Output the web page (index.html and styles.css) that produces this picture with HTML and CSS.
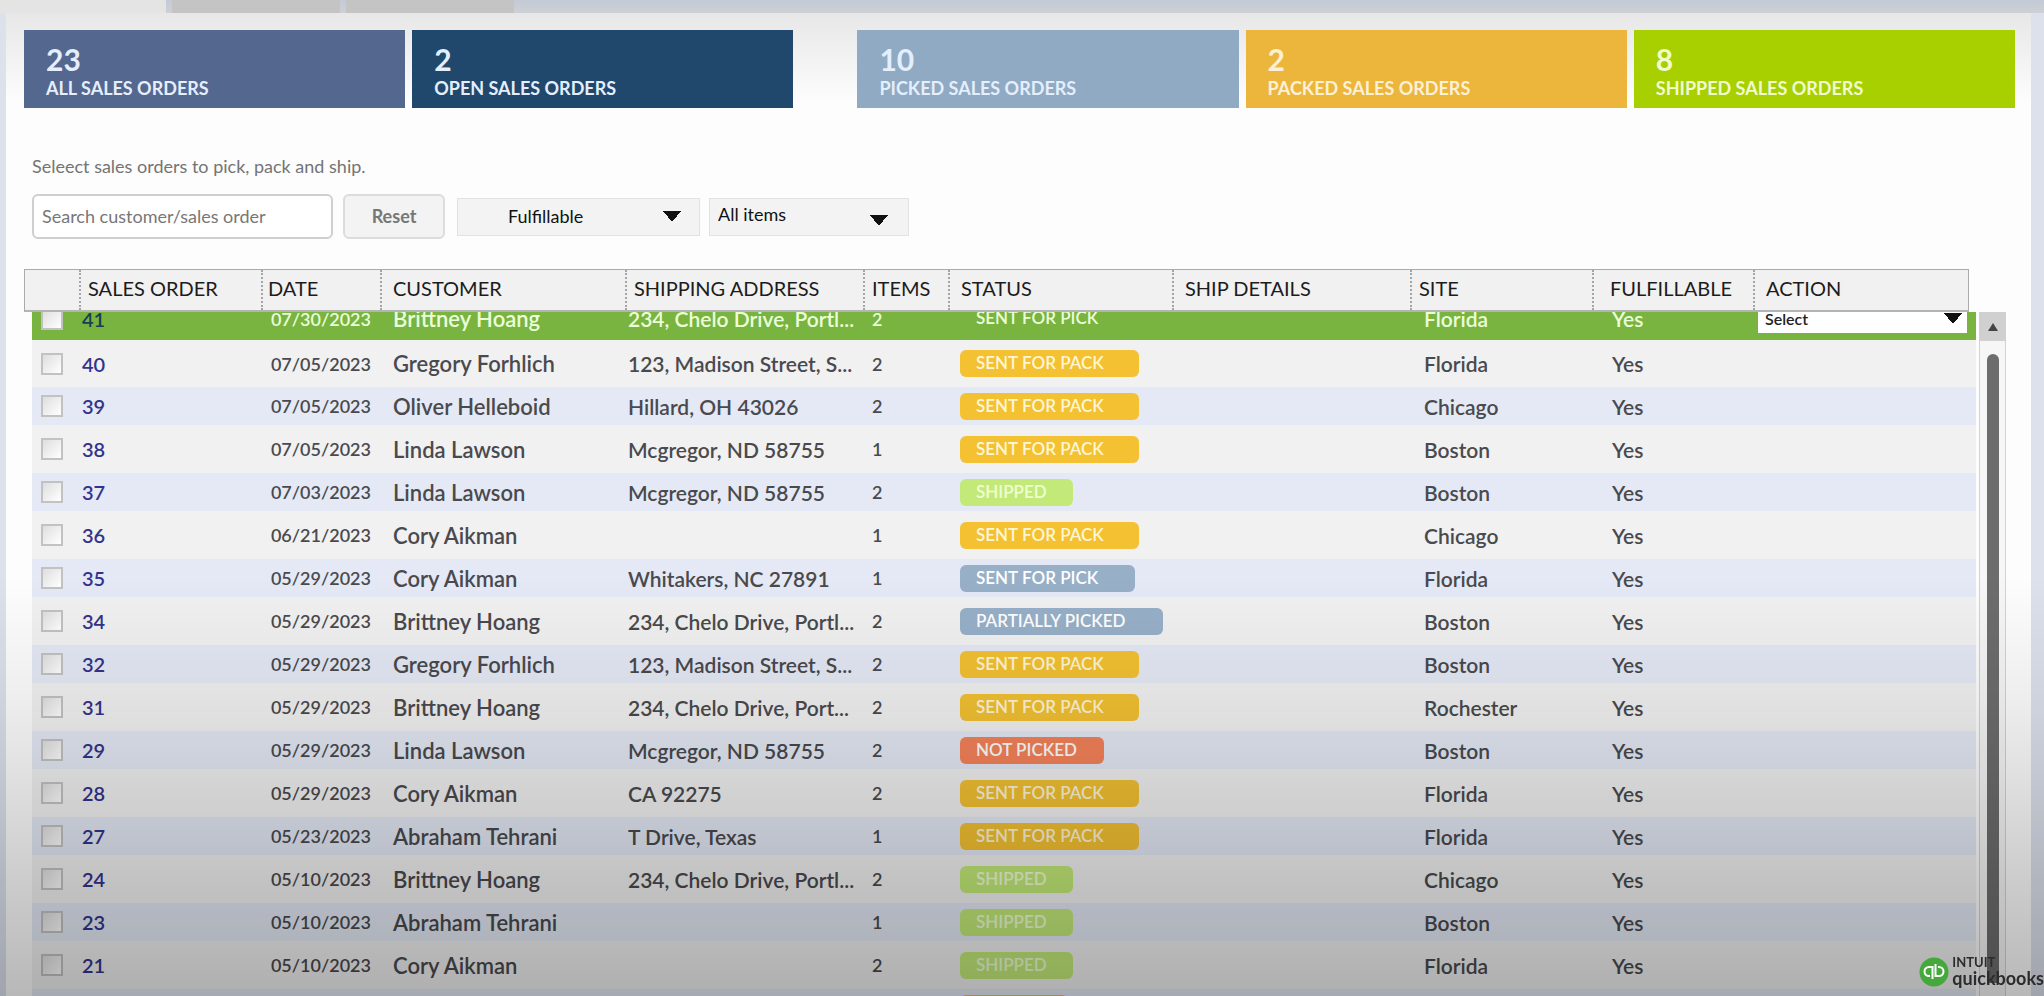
FILE: index.html
```html
<!DOCTYPE html>
<html lang="en">
<head>
<meta charset="utf-8">
<title>Sales Orders</title>
<link rel="stylesheet" href="styles.css">
</head>
<body>
<nav class="tabs" aria-label="Views">
  <button class="tab tab-active" type="button" aria-label="Current view"></button>
  <button class="tab" type="button" aria-label="Second view"></button>
  <button class="tab" type="button" aria-label="Third view"></button>
</nav>
<main class="panel">
  <section class="cards">
    <a class="card all" href="#"><strong>23</strong><span>ALL SALES ORDERS</span></a>
    <a class="card open" href="#"><strong>2</strong><span>OPEN SALES ORDERS</span></a>
    <a class="card picked" href="#"><strong>10</strong><span>PICKED SALES ORDERS</span></a>
    <a class="card packed" href="#"><strong>2</strong><span>PACKED SALES ORDERS</span></a>
    <a class="card shipped" href="#"><strong>8</strong><span>SHIPPED SALES ORDERS</span></a>
  </section>
  <section class="filters">
    <label class="hint" for="search">Seleect sales orders to pick, pack and ship.</label>
    <div class="controls">
      <input id="search" class="search" type="text" placeholder="Search customer/sales order">
      <button class="reset" type="button">Reset</button>
      <select class="pick fulfil" aria-label="Fulfillment"><option>Fulfillable</option></select>
      <select class="pick items-filter" aria-label="Items"><option>All items</option></select>
    </div>
  </section>
  <section class="orders">
    <table class="head">
      <colgroup><col class="h0"><col class="h1"><col class="h2"><col class="h3"><col class="h4"><col class="h5"><col class="h6"><col class="h7"><col class="h8"><col class="h9"><col></colgroup>
      <thead><tr><th></th><th class="l9">SALES ORDER</th><th class="l6">DATE</th><th class="l12">CUSTOMER</th><th class="l9">SHIPPING ADDRESS</th><th class="l9">ITEMS</th><th class="l12">STATUS</th><th class="l12">SHIP DETAILS</th><th class="l9">SITE</th><th class="l16">FULFILLABLE</th><th class="l12">ACTION</th></tr></thead>
    </table>
    <div class="viewport">
      <div class="scroller">
        <table class="body">
          <colgroup><col class="b0"><col class="b1"><col class="b2"><col class="b3"><col class="b4"><col class="b5"><col class="b6"><col class="b7"><col class="b8"><col></colgroup>
          <tbody id="rows"></tbody>
        </table>
      </div>
      <div class="scrollbar">
        <button class="up" type="button" aria-label="Scroll up"><svg viewBox="0 0 10 8"><path d="M5 0 10 8H0z"/></svg></button>
        <div class="track"><div class="thumb"></div></div>
      </div>
    </div>
  </section>
</main>
<div class="shade"></div>
<div class="brand">
  <svg viewBox="0 0 30 30" aria-hidden="true"><circle cx="15" cy="15" r="14.5" fill="#45a83c"/><g fill="none" stroke="#fff" stroke-width="2"><path d="M13.5 22V10H10a4.5 4.5 0 0 0 0 9h1"/><path d="M16.5 7V19H20a4.5 4.5 0 0 0 0-9h-1"/></g></svg>
  <p><span class="intuit">INTUIT</span><span class="qb">quickbooks</span></p>
</div>
<script src="rows.js"></script>
</body>
</html>
```
FILE: styles.css
```css
* { box-sizing: border-box; }
body {
  margin: 0;
  height: 100vh;
  overflow: hidden;
  display: flex;
  flex-direction: column;
  background: #dce1ec;
  font-family: Lato, "Open Sans", sans-serif;
  font-size: 20px;
  color: #4a4a4e;
}
button, input, select { font: inherit; color: inherit; margin: 0; }
.tabs {
  display: flex;
  gap: 6px;
  height: 13px;
  flex: none;
  background: linear-gradient(#c3cad6, #cdd1d5);
}
.tab { width: 168px; border: 0; padding: 0; background: #c4c4c4; }
.tab-active { width: 166px; background: #e4e4e4; }
.panel {
  flex: 1;
  min-height: 0;
  display: flex;
  flex-direction: column;
  margin: 0 13px 0 6px;
  padding: 17px 16px 0 18px;
  background: linear-gradient(#e7e7e7, #fdfdfd 90px);
}
.cards { display: flex; gap: 7px; }
.card {
  flex: 1;
  height: 78px;
  padding: 12px 22px;
  display: flex;
  flex-direction: column;
  color: #e4eefc;
  text-decoration: none;
  line-height: 24px;
}
.card strong { font-size: 30px; line-height: 34px; }
.card span { font-size: 18px; font-weight: 700; }
.all { background: #54678f; }
.open { background: #1f486c; margin-right: 57px; }
.picked { background: #8faac2; }
.packed { background: #ebb63b; color: #fdf0d6; }
.shipped { background: #a8d000; color: #f0fbd0; }
.filters { padding: 46px 0 30px 8px; }
.hint { display: block; line-height: 24px; font-size: 18px; color: #747474; }
.controls { display: flex; align-items: center; margin-top: 16px; font-size: 18px; }
.search {
  width: 301px;
  height: 45px;
  padding: 0 8px 2px;
  border: 2px solid #cfcfcf;
  border-radius: 6px;
  background: #fff;
}
.search::placeholder { color: #777; opacity: 1; }
.reset {
  width: 102px;
  height: 45px;
  margin: 0 12px 0 10px;
  padding: 0 0 2px;
  border: 2px solid #dcdcdc;
  border-radius: 6px;
  background: #f3f3f3;
  color: #777;
  font-weight: 700;
}
.pick {
  height: 38px;
  border: 1px solid #e2e2e2;
  background-color: #f3f3f3;
  color: #111;
}
.pick, .act {
  appearance: none;
  border-radius: 0;
  background-image: linear-gradient(to top right, transparent 50%, #111 50%), linear-gradient(to top left, transparent 50%, #111 50%);
  background-repeat: no-repeat;
  background-size: 9px 11px;
}
.fulfil { width: 243px; padding: 0 0 2px 50px; background-position: right 27px center, right 18px center; }
.items-filter { width: 200px; margin-left: 9px; padding: 0 0 6px 8px; background-position: right 29px bottom 9px, right 20px bottom 9px; }

.orders { flex: 1; min-height: 0; display: flex; flex-direction: column; }
table { border-collapse: separate; border-spacing: 0; table-layout: fixed; }
.head {
  width: calc(100% - 46px);
  height: 43px;
  border: 1px solid #ababab;
  border-bottom: 2px solid #b4b4b4;
  background: #f1f1f1;
  color: #1c1c1c;
}
.head th {
  padding: 0 0 4px;
  text-align: left;
  font-weight: 400;
  white-space: nowrap;
  border-left: 2px dotted #a5a5a5;
}
.head th:first-child { border-left: 0; }
.head .l6 { padding-left: 5px; }
.head .l9 { padding-left: 7px; }
.head .l12 { padding-left: 11px; }
.head .l16 { padding-left: 16px; }
.h0 { width: 54px; } .h1 { width: 182px; } .h2 { width: 119px; }
.h3 { width: 245px; } .h4 { width: 238px; } .h5 { width: 85px; }
.h6 { width: 224px; } .h7 { width: 238px; } .h8 { width: 182px; }
.h9 { width: 161px; }

.viewport { flex: 1; min-height: 0; display: flex; overflow: hidden; padding: 0 9px 0 8px; gap: 3px; }
.scroller { flex: 1; overflow: hidden; }
.body { width: 100%; margin-top: -15px; font-weight: 600; }
.b0 { width: 50px; } .b1 { width: 120px; } .b2 { width: 191px; }
.b3 { width: 235px; } .b4 { width: 244px; } .b5 { width: 88px; }
.b6 { width: 464px; } .b7 { width: 188px; } .b8 { width: 146px; }
.body td { padding: 0; height: 48px; background: #f1f1f1; white-space: nowrap; }
.body tr:nth-child(odd) td { height: 38px; background: #e4e9f5; }
.body tr:nth-child(2) td { height: 47px; }
.body tr.current td { height: 43px; background: #79b340; color: #eaffd8; }
.body .tick { padding-left: 9px; }
.tick input {
  appearance: none;
  display: block;
  width: 22px;
  height: 22px;
  margin: 0;
  border: 2px solid #c2c2c2;
  background: linear-gradient(135deg, #dedede, #fff);
}
.body .date { text-align: right; padding-right: 22px; font-size: 18px; }
.body .name { font-size: 22px; }
.body .place { font-size: 21px; }
.body .count { font-size: 18px; }
.order { color: #33338c; text-decoration: none; }
.current .order { color: #173f52; }
.badge {
  display: block;
  height: 27px;
  padding-left: 16px;
  border-radius: 6px;
  line-height: 26px;
  font-size: 17px;
  color: #fff;
}
.pack { width: 179px; background: #f3c132; color: #fff6d4; }
.sendpick { width: 175px; background: #97b0c8; }
.part { width: 203px; background: #97b0c8; }
.notp { width: 144px; background: #f5835a; }
.ship { width: 113px; background: #c3ea78; color: #eeffd2; }
.packed-short { width: 108px; background: #f3c132; }
.current .badge { background: none; color: #eaffd8; }
.act {
  display: block;
  width: calc(100% - 9px);
  height: 28px;
  padding: 0 7px;
  border: 0;
  background-color: #fff;
  background-position: right 14px center, right 5px center;
  color: #222;
  font-size: 16px;
}
.scrollbar { width: 27px; display: flex; flex-direction: column; }
.up { height: 29px; flex: none; border: 0; padding: 0; background: #d0d0d0; }
.up svg { width: 10px; height: 8px; fill: #444; display: block; margin: 0 auto; }
.track {
  flex: 1;
  display: flex;
  justify-content: center;
  padding: 13px 0;
  border: solid #d2d2d2;
  border-width: 0 1px;
  background: #f6f6f6;
}
.thumb { width: 12px; border-radius: 6px 6px 0 0; background: #6d6d6d; }
.shade {
  position: fixed;
  inset: 0;
  pointer-events: none;
  background: linear-gradient(transparent 58%, rgba(0,0,0,.06) 70%, rgba(0,0,0,.12) 79%, rgba(0,0,0,.19) 88%, rgba(0,0,0,.27));
}
.brand {
  position: fixed;
  right: 0;
  bottom: 9px;
  display: flex;
  align-items: center;
  gap: 3px;
  color: #2c2c2e;
}
.brand svg { width: 30px; height: 30px; }
.brand p { margin: 0; display: flex; flex-direction: column; font-weight: 700; }
.intuit { font-size: 13px; line-height: 13px; }
.qb { font-size: 18px; line-height: 18px; }
```
FILE: rows.js
```js
const rows = [
  ["41", "07/30/2023", "Brittney Hoang", "234, Chelo Drive, Portl...", 2, "sendpick", "Florida"],
  ["40", "07/05/2023", "Gregory Forhlich", "123, Madison Street, S...", 2, "pack", "Florida"],
  ["39", "07/05/2023", "Oliver Helleboid", "Hillard, OH 43026", 2, "pack", "Chicago"],
  ["38", "07/05/2023", "Linda Lawson", "Mcgregor, ND 58755", 1, "pack", "Boston"],
  ["37", "07/03/2023", "Linda Lawson", "Mcgregor, ND 58755", 2, "ship", "Boston"],
  ["36", "06/21/2023", "Cory Aikman", "", 1, "pack", "Chicago"],
  ["35", "05/29/2023", "Cory Aikman", "Whitakers, NC 27891", 1, "sendpick", "Florida"],
  ["34", "05/29/2023", "Brittney Hoang", "234, Chelo Drive, Portl...", 2, "part", "Boston"],
  ["32", "05/29/2023", "Gregory Forhlich", "123, Madison Street, S...", 2, "pack", "Boston"],
  ["31", "05/29/2023", "Brittney Hoang", "234, Chelo Drive, Port...", 2, "pack", "Rochester"],
  ["29", "05/29/2023", "Linda Lawson", "Mcgregor, ND 58755", 2, "notp", "Boston"],
  ["28", "05/29/2023", "Cory Aikman", "CA 92275", 2, "pack", "Florida"],
  ["27", "05/23/2023", "Abraham Tehrani", "T Drive, Texas", 1, "pack", "Florida"],
  ["24", "05/10/2023", "Brittney Hoang", "234, Chelo Drive, Portl...", 2, "ship", "Chicago"],
  ["23", "05/10/2023", "Abraham Tehrani", "", 1, "ship", "Boston"],
  ["21", "05/10/2023", "Cory Aikman", "", 2, "ship", "Florida"],
  null
];
const labels = {
  pack: "SENT FOR PACK", sendpick: "SENT FOR PICK", part: "PARTIALLY PICKED",
  notp: "NOT PICKED", ship: "SHIPPED"
};
document.getElementById("rows").innerHTML = rows.map((r, i) => {
  if (!r) return '<tr><td colspan="6"></td><td><span class="badge packed-short"></span></td><td colspan="3"></td></tr>';
  const [id, date, customer, address, items, status, site] = r;
  const action = i === 0 ? '<select class="act" aria-label="Action"><option>Select</option></select>' : "";
  return `<tr class="${i === 0 ? "current" : ""}">
    <td class="tick"><input type="checkbox" aria-label="Order ${id}"></td>
    <td><a class="order" href="#">${id}</a></td><td class="date">${date}</td>
    <td class="name">${customer}</td><td class="place">${address}</td><td class="count">${items}</td>
    <td><span class="badge ${status}">${labels[status]}</span></td>
    <td class="place">${site}</td><td class="place">Yes</td><td>${action}</td></tr>`;
}).join("");
```
